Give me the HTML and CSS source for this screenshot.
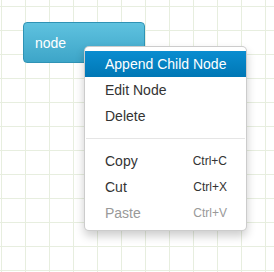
FILE: index.html
```html
<!DOCTYPE html>
<html lang="en">
<head>
    <meta charset="UTF-8">
    <meta name="viewport" content="width=device-width, initial-scale=1.0">
    <title>Mind Map</title>
    <link rel="stylesheet" href="styles.css">
</head>
<body>
    <div class="canvas">
        <div class="node">node</div>

        <ul class="context-menu">
            <li class="menu-item active"><span>Append Child Node</span></li>
            <li class="menu-item"><span>Edit Node</span></li>
            <li class="menu-item"><span>Delete</span></li>
            <li class="divider"></li>
            <li class="menu-item"><span>Copy</span><span class="shortcut">Ctrl+C</span></li>
            <li class="menu-item"><span>Cut</span><span class="shortcut">Ctrl+X</span></li>
            <li class="menu-item disabled"><span>Paste</span><span class="shortcut">Ctrl+V</span></li>
        </ul>
    </div>
</body>
</html>
```

FILE: styles.css
```css
* {
    margin: 0;
    padding: 0;
    box-sizing: border-box;
}

body {
    font-family: 'Liberation Sans', Arial, sans-serif;
    font-size: 14px;
    color: #333;
    background: #fff;
}

.canvas {
    position: relative;
    width: 274px;
    height: 272px;
    overflow: hidden;
    background-color: #fff;
    background-image:
        linear-gradient(to right, #e7eedf 1px, transparent 1px),
        linear-gradient(to bottom, #e7eedf 1px, transparent 1px);
    background-size: 24px 24px;
    background-position: 1px 6px;
}

/* node on the canvas */
.node {
    position: absolute;
    left: 23px;
    top: 22px;
    width: 122px;
    height: 41px;
    display: flex;
    align-items: center;
    padding-left: 11px;
    color: #fff;
    font-size: 14px;
    border: 1px solid #2f93b5;
    border-radius: 4px;
    background: linear-gradient(to bottom, #5fc2df, #3da5c8);
}

/* right click menu */
.context-menu {
    position: absolute;
    left: 84px;
    top: 46px;
    width: 163px;
    list-style: none;
    padding: 4px 0;
    background: #fff;
    border: 1px solid rgba(0, 0, 0, 0.2);
    border-radius: 5px;
    box-shadow: 0 5px 10px rgba(0, 0, 0, 0.2);
}

.menu-item {
    display: flex;
    justify-content: space-between;
    align-items: center;
    height: 26px;
    padding: 0 19px 0 20px;
    color: #333;
    white-space: nowrap;
}

.menu-item.active {
    color: #fff;
    background: linear-gradient(to bottom, #0a8dd0, #0077b5);
}

.menu-item.disabled {
    color: #999;
}

.shortcut {
    font-size: 12px;
}

.divider {
    height: 1px;
    margin: 9px 1px;
    background: #e5e5e5;
}
```
